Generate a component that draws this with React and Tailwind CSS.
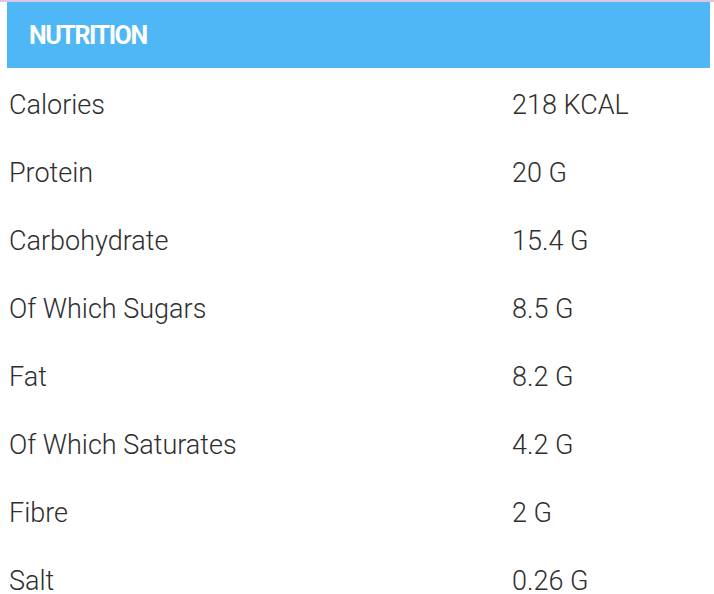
import React from 'react';

const rows = [
  ['Calories', '218 KCAL'],
  ['Protein', '20 G'],
  ['Carbohydrate', '15.4 G'],
  ['Of Which Sugars', '8.5 G'],
  ['Fat', '8.2 G'],
  ['Of Which Saturates', '4.2 G'],
  ['Fibre', '2 G'],
  ['Salt', '0.26 G'],
];

export default function App() {
  return (
    <div className="w-[714px] h-[594px] overflow-hidden bg-white font-['Roboto',sans-serif]">
      <div className="h-[2px] bg-[#dcc6e6]" />
      <div className="ml-[7px] mr-[4px] h-[66px] bg-[#4fb7f6] flex items-center pl-[22px]">
        <h2 className="text-white font-bold text-[25px] tracking-[-1.4px] leading-none">NUTRITION</h2>
      </div>
      <div className="mt-[3px]">
        {rows.map(([label, value]) => (
          <div key={label} className="h-[68px] flex items-center text-[27px] leading-none font-light text-[#2e2e2e]">
            <span className="w-[512px] pl-[9px]">{label}</span>
            <span>{value}</span>
          </div>
        ))}
      </div>
    </div>
  );
}
